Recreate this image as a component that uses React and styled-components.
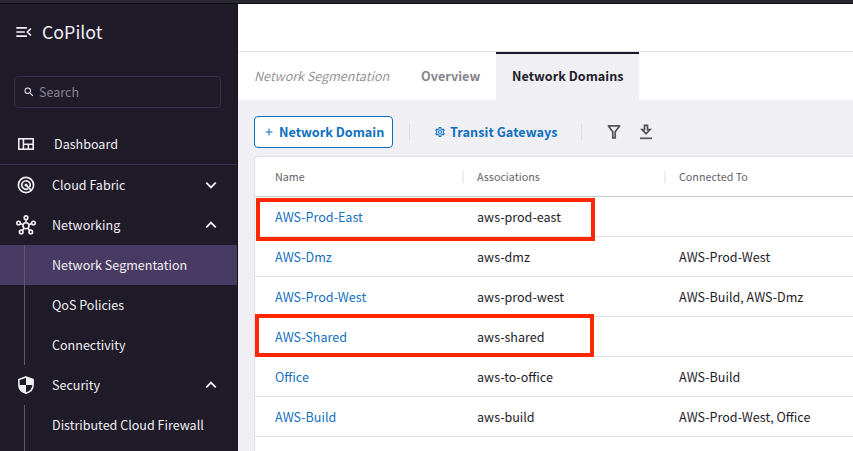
import React from 'react';
import styled, { createGlobalStyle, css } from 'styled-components';
import { MdSearch, MdOutlineSettings, MdAdd } from 'react-icons/md';

const GlobalStyle = createGlobalStyle`
  * { box-sizing: border-box; }
  body {
    margin: 0;
    overflow: hidden;
    font-family: "Noto Sans CJK SC", "Noto Sans", sans-serif;
    font-size: 12.55px;
    color: #1f1b29;
  }
  button { font: inherit; padding: 0; margin: 0; }
  svg { display: block; flex: none; }
`;

const Window = styled.div`
  display: flex;
  flex-direction: column;
  width: 853px;
  height: 451px;
  overflow: hidden;
  background: #fff;
`;

const TopStrip = styled.div`
  flex: none;
  height: 4px;
  background: #29272f;
  border-bottom: 1px solid #0d0b12;
`;

const Body = styled.div`
  display: flex;
  flex: 1;
  min-height: 0;
`;

const Sidebar = styled.aside`
  flex: none;
  width: 238px;
  overflow: hidden;
  background: #1f1b29;
  border-right: 1px solid #19151f;
  color: #f0eff3;
`;

const Brand = styled.header`
  display: flex;
  align-items: center;
  gap: 10px;
  height: 56px;
  padding-left: 16px;
`;

const BrandName = styled.span`
  margin-top: -2px;
  font-size: 17.8px;
  line-height: 24px;
`;

const SearchBox = styled.div`
  display: flex;
  align-items: center;
  gap: 4px;
  width: 207px;
  height: 32px;
  margin: 16px 0 16px 14px;
  padding-left: 8px;
  border: 1px solid #373051;
  border-radius: 4px;
`;

const SearchLabel = styled.span`
  line-height: 20px;
  color: #87848f;
`;

const NavRow = styled.div`
  display: flex;
  align-items: center;
  height: 40px;
  padding: 0 20px 0 16px;
  line-height: 20px;
  ${(p) => p.$divided && css`
    height: 41px;
    border-bottom: 1px solid #373051;
  `}
`;

const NavIcon = styled.span`
  display: flex;
  justify-content: center;
  width: 20px;
  margin-right: ${(p) => p.$gap || 16}px;
`;

const NavLabel = styled.span`
  flex: 1;
`;

const SubItem = styled.div`
  display: flex;
  height: 40px;
  line-height: 40px;
  background: ${(p) => (p.$selected ? '#483b63' : 'transparent')};

  &::before {
    content: '';
    width: 1px;
    margin: 0 27px 0 24px;
    background: #5e5b66;
  }
`;

const Main = styled.main`
  display: flex;
  flex-direction: column;
  flex: 1;
  min-width: 0;
  background: #f0eff4;
`;

const PageHeader = styled.div`
  flex: none;
  height: 48px;
  background: #fff;
  border-bottom: 1px solid #e2e1e5;
`;

const Tabs = styled.nav`
  display: flex;
  flex: none;
  height: 48px;
  padding-left: 16px;
  background: #fff;
  line-height: 48px;
`;

const Crumb = styled.span`
  width: 151px;
  font-style: italic;
  color: #949298;
`;

const Tab = styled.span`
  padding: 0 16px;
  width: ${(p) => p.$width}px;
  font-size: 12.6px;
  font-weight: 700;
  letter-spacing: 0.03px;
  white-space: nowrap;
  color: #85838b;
  ${(p) => p.$active && css`
    border-top: 2px solid #1a1628;
    line-height: 44px;
    background: #f0eff4;
    color: #1f1b29;
  `}
`;

const Toolbar = styled.div`
  display: flex;
  align-items: center;
  flex: none;
  height: 56px;
  padding: 8px 16px 0;
`;

const ActionButton = styled.button`
  display: flex;
  align-items: center;
  gap: 4px;
  height: 32px;
  border: 0;
  background: none;
  font-size: 12.65px;
  font-weight: 700;
  line-height: 20px;
  white-space: nowrap;
  color: #0d70c0;
  ${(p) => p.$outlined && css`
    width: 139px;
    padding-left: 8px;
    border: 1px solid #0d70c0;
    border-radius: 4px;
    background: #fff;
  `}
`;

const ActionLabel = styled.span`
  width: ${(p) => p.$width}px;
  text-align: left;
  letter-spacing: ${(p) => p.$tracking || 0}px;
`;

const Separator = styled.span`
  width: 1px;
  height: 16px;
  margin: 0 ${(p) => p.$right}px 0 ${(p) => p.$left}px;
  background: #dddce1;
`;

const IconButton = styled.button`
  display: flex;
  align-items: center;
  justify-content: center;
  width: 32px;
  height: 32px;
  border: 0;
  background: none;
  color: #55535b;
`;

const TableCard = styled.section`
  position: relative;
  flex: 1;
  margin-left: 16px;
  border: 1px solid #e1e0e5;
  border-right: 0;
  border-bottom: 0;
  border-radius: 4px 0 0 0;
  background: #fff;
`;

const TableRow = styled.div`
  display: grid;
  grid-template-columns: 202px 202px 1fr;
  align-items: center;
  height: 40px;
  padding-left: 20px;
  border-bottom: 1px solid #e2e1e5;
  line-height: 20px;
`;

const HeadRow = styled(TableRow)`
  border-bottom-color: #c8c7cd;
  font-size: 10.75px;
  color: #66646c;
`;

const HeadCell = styled.span`
  display: flex;
  align-items: center;
  justify-content: space-between;
  height: 20px;

  &:not(:last-child)::after {
    content: '';
    width: 2px;
    height: 12px;
    margin-right: 13px;
    background: #eeedf0;
  }
`;

const Cell = styled.span`
  white-space: nowrap;
`;

const DomainLink = styled(Cell)`
  color: #1271bd;
`;

const Highlight = styled.div`
  position: absolute;
  left: ${(p) => p.$left}px;
  top: ${(p) => p.$top}px;
  width: 339px;
  height: 43px;
  border: 4px solid #ff2600;
`;

const MenuIcon = () => (
  <svg width="16" height="12" viewBox="0 0 16 12" fill="none" stroke="currentColor" strokeWidth="1.7">
    <path d="M.3 1.900h10.600M.3 6h8.500M.3 10.100h10.600M14.900 2.500 11.400 6l3.500 3.500" />
  </svg>
);

const DashboardIcon = () => (
  <svg width="16" height="12" viewBox="0 0 16 12" fill="none" stroke="currentColor" strokeWidth="1.6">
    <rect x=".8" y=".8" width="14.4" height="10.4" />
    <path d="M5.4 1v10M5.4 6.2H15M10.4 6.500v5" />
  </svg>
);

const RadarIcon = () => (
  <svg width="18" height="18" viewBox="0 0 18 18" fill="none" stroke="currentColor" strokeWidth="1.7">
    <circle cx="9" cy="9" r="7.600" />
    <path d="M11.100 12.700A4.250 4.250 0 1 1 12.700 11.100" />
    <path d="M9.300 9.300 14.200 14.200" />
    <circle cx="9" cy="9" r="1.500" fill="currentColor" stroke="none" />
  </svg>
);

const HubIcon = () => (
  <svg width="20" height="20" viewBox="0 0 20 20" fill="none" stroke="currentColor" strokeWidth="1.6">
    <circle cx="10" cy="10.700" r="3" />
    <circle cx="10" cy="2.700" r="1.800" />
    <circle cx="2.600" cy="8" r="1.800" />
    <circle cx="17.400" cy="8" r="1.800" />
    <circle cx="5.200" cy="16.900" r="1.800" />
    <circle cx="14.800" cy="16.900" r="1.800" />
    <path d="M10 4.500v3.200M4.300 8.600l2.900 1.100M15.700 8.600l-2.900 1.100M6.300 15.400l1.900-2.300M13.700 15.400l-1.900-2.300" />
  </svg>
);

const ShieldIcon = () => (
  <svg width="16" height="18" viewBox="0 0 16 18">
    <path d="M8 1l7 2.500V9H8ZM1 9h7v8C3.500 15.700 1 12.700 1 9Z" fill="currentColor" />
    <path d="M8 .9 15.100 3.500V9c0 3.700-2.600 6.800-7.100 8.200C3.500 15.800.9 12.700.9 9V3.500Z" fill="none" stroke="currentColor" strokeWidth="1.6" />
  </svg>
);

const Chevron = ({ up }) => (
  <svg width="12" height="8" viewBox="0 0 12 8" fill="none" stroke="currentColor" strokeWidth="1.900">
    <path d={up ? 'M1.300 6.400 6 1.700l4.700 4.700' : 'M1.300 1.600 6 6.300l4.700-4.700'} />
  </svg>
);

const FilterIcon = () => (
  <svg width="14" height="16" viewBox="0 0 14 16" fill="none" stroke="currentColor" strokeWidth="1.700" strokeLinejoin="round">
    <path d="M1.400 1.900h11.200L8.200 7.700v6.200H5.800V7.700Z" />
  </svg>
);

const DownloadIcon = () => (
  <svg width="14" height="16" viewBox="0 0 14 16" fill="none" stroke="currentColor" strokeWidth="1.700">
    <path d="M5.500 1.400h3v4.200h2.500L7 9.800 3 5.600h2.500Z" />
    <path d="M1 14.300h12" />
  </svg>
);

const rows = [
  ['AWS-Prod-East', 'aws-prod-east', ''],
  ['AWS-Dmz', 'aws-dmz', 'AWS-Prod-West'],
  ['AWS-Prod-West', 'aws-prod-west', 'AWS-Build, AWS-Dmz'],
  ['AWS-Shared', 'aws-shared', ''],
  ['Office', 'aws-to-office', 'AWS-Build'],
  ['AWS-Build', 'aws-build', 'AWS-Prod-West, Office'],
];

export default function App() {
  return (
    <Window>
      <GlobalStyle />
      <TopStrip />
      <Body>
        <Sidebar>
          <Brand>
            <MenuIcon />
            <BrandName>CoPilot</BrandName>
          </Brand>
          <SearchBox>
            <MdSearch size={12} />
            <SearchLabel>Search</SearchLabel>
          </SearchBox>
          <NavRow $divided>
            <NavIcon $gap={18}><DashboardIcon /></NavIcon>
            <NavLabel>Dashboard</NavLabel>
          </NavRow>
          <NavRow>
            <NavIcon><RadarIcon /></NavIcon>
            <NavLabel>Cloud Fabric</NavLabel>
            <Chevron />
          </NavRow>
          <NavRow>
            <NavIcon><HubIcon /></NavIcon>
            <NavLabel>Networking</NavLabel>
            <Chevron up />
          </NavRow>
          <SubItem $selected>Network Segmentation</SubItem>
          <SubItem>QoS Policies</SubItem>
          <SubItem>Connectivity</SubItem>
          <NavRow>
            <NavIcon><ShieldIcon /></NavIcon>
            <NavLabel>Security</NavLabel>
            <Chevron up />
          </NavRow>
          <SubItem>Distributed Cloud Firewall</SubItem>
          <SubItem />
        </Sidebar>
        <Main>
          <PageHeader />
          <Tabs>
            <Crumb>Network Segmentation</Crumb>
            <Tab $width={91}>Overview</Tab>
            <Tab $active $width={143}>Network Domains</Tab>
          </Tabs>
          <Toolbar>
            <ActionButton $outlined>
              <MdAdd size={12} />
              <ActionLabel $width={106}>Network Domain</ActionLabel>
            </ActionButton>
            <Separator $left={16} $right={24} />
            <ActionButton>
              <MdOutlineSettings size={12} />
              <ActionLabel $width={108} $tracking={0.06}>Transit Gateways</ActionLabel>
            </ActionButton>
            <Separator $left={23} $right={16} />
            <IconButton><FilterIcon /></IconButton>
            <IconButton><DownloadIcon /></IconButton>
          </Toolbar>
          <TableCard>
            <HeadRow>
              <HeadCell>Name</HeadCell>
              <HeadCell>Associations</HeadCell>
              <HeadCell>Connected To</HeadCell>
            </HeadRow>
            {rows.map(([name, association, connected]) => (
              <TableRow key={name}>
                <DomainLink>{name}</DomainLink>
                <Cell>{association}</Cell>
                <Cell>{connected}</Cell>
              </TableRow>
            ))}
            <Highlight $left={1} $top={41} />
            <Highlight $left={0} $top={157} />
          </TableCard>
        </Main>
      </Body>
    </Window>
  );
}
